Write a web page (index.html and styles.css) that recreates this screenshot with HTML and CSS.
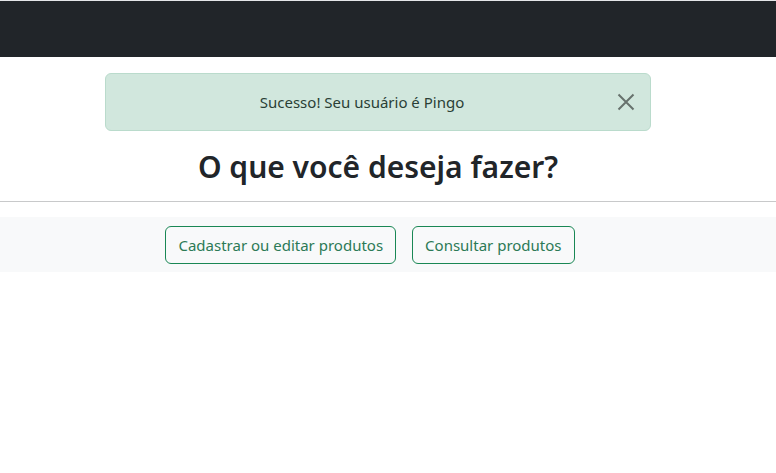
FILE: index.html
```html
<!DOCTYPE html>
<html lang="pt-BR">
<head>
<meta charset="utf-8">
<title>Início</title>
<link rel="stylesheet" href="styles.css">
</head>
<body>
<nav class="navbar"></nav>
<main class="page">
  <div class="alert" role="alert">
    <span class="alert-text">Sucesso! Seu usuário é Pingo</span>
    <button class="btn-close" type="button" aria-label="Fechar">
      <svg viewBox="0 0 18 18" width="18" height="18"><path d="M1.5 1.5 L16.5 16.5 M16.5 1.5 L1.5 16.5" stroke="#000" stroke-width="2" fill="none"/></svg>
    </button>
  </div>
  <h1 class="title">O que você deseja fazer?</h1>
</main>
<hr class="divider">
<section class="actions">
  <div class="actions-inner">
    <button class="btn-outline" type="button">Cadastrar ou editar produtos</button>
    <button class="btn-outline" type="button">Consultar produtos</button>
  </div>
</section>
</body>
</html>
```
FILE: styles.css
```css
* { box-sizing: border-box; }
html, body { margin: 0; padding: 0; background: #fff; }
body {
  font-family: "Noto Sans", "Open Sans", sans-serif;
  color: #212529;
  border-top: 1px solid #e4e6e8;
}
.navbar {
  height: 56px;
  background: #212529;
}
.page {
  padding-right: 20px;
}
.alert {
  position: relative;
  width: 546px;
  margin: 16px auto 0;
  padding: 16px 48px 16px 16px;
  border: 1px solid #badbcc;
  border-radius: 6px;
  background: #d1e7dd;
  color: #0f5132;
  text-align: center;
  font-size: 15px;
  line-height: 24px;
}
.alert-text { color: #2a3f36; }
.btn-close {
  position: absolute;
  top: 19px;
  right: 15px;
  width: 18px;
  height: 18px;
  padding: 0;
  border: 0;
  background: transparent;
  opacity: 0.5;
  display: flex;
}
.title {
  margin: 16px 0 0;
  text-align: center;
  font-size: 30px;
  font-weight: 600;
  line-height: 40px;
  color: #212529;
}
.divider {
  margin: 14px 0 15px;
  border: 0;
  border-top: 1px solid #c8c9ca;
}
.actions {
  background: #f8f9fa;
  padding: 9px 20px 8px 0;
}
.actions-inner {
  display: flex;
  justify-content: center;
  gap: 16px;
  padding-right: 16px;
}
.btn-outline {
  height: 38px;
  padding: 6px 12px;
  border: 1px solid #198754;
  border-radius: 6px;
  background: transparent;
  color: #2c7a56;
  font-family: "Noto Sans", "Open Sans", sans-serif;
  font-size: 15px;
  line-height: 24px;
}
```
